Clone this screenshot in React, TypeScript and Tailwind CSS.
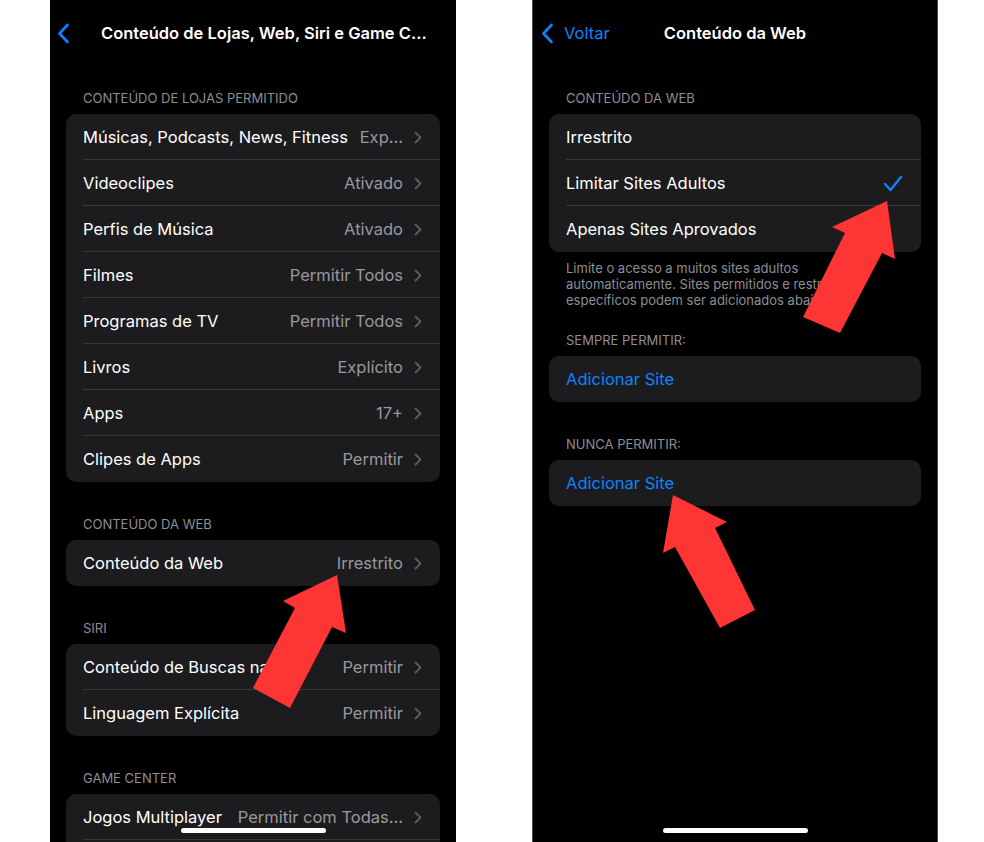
import React from 'react';

type Row = { label: string; value?: string; blue?: boolean; check?: boolean };

const font = { fontFamily: 'Inter, "Liberation Sans", sans-serif' };

const BackChevron = () => (
  <svg width="13" height="21" viewBox="0 0 13 21" className="shrink-0">
    <path d="M10.5 2 L2.5 10.5 L10.5 19" fill="none" stroke="#0a84ff" strokeWidth="2.6" strokeLinecap="round" strokeLinejoin="round" />
  </svg>
);

const RowChevron = () => (
  <svg width="8" height="13" viewBox="0 0 8 13" className="shrink-0 ml-[11px]">
    <path d="M1.5 1.5 L6.5 6.5 L1.5 11.5" fill="none" stroke="#5b5b60" strokeWidth="1.8" strokeLinecap="round" strokeLinejoin="round" />
  </svg>
);

const Check = () => (
  <svg width="20" height="17" viewBox="0 0 20 17" className="shrink-0">
    <path d="M2 9 L7.5 15 L18 2" fill="none" stroke="#0a84ff" strokeWidth="2.4" strokeLinecap="round" strokeLinejoin="round" />
  </svg>
);

const Header = ({ text, top = 'pt-[35px]' }: { text: string; top?: string }) => (
  <div className={`${top} pb-[9px] pl-[33px] text-[13px] leading-[14px] text-[#8e8e93]`}>{text}</div>
);

const Card = ({ rows }: { rows: Row[] }) => (
  <div className="mx-[16px] rounded-[10px] bg-[#1c1c1e] overflow-hidden">
    {rows.map((r, i) => (
      <div key={i} className="pl-[17px]">
        <div
          className={`flex items-center h-[46px] pt-[1px] pr-[18px] ${i < rows.length - 1 ? 'border-b border-[#38383a]' : ''}`}
        >
          <span className={`text-[16.5px] whitespace-nowrap ${r.blue ? 'text-[#0a84ff]' : 'text-white'}`}>{r.label}</span>
          <span className="flex-1" />
          {r.value && <span className="text-[16.5px] text-[#98989f] whitespace-nowrap">{r.value}</span>}
          {r.value && <RowChevron />}
          {r.check && <Check />}
        </div>
      </div>
    ))}
  </div>
);

const HomeBar = () => (
  <div className="absolute bottom-[9px] left-0 right-0 flex justify-center">
    <div className="w-[145px] h-[5px] rounded-full bg-white" />
  </div>
);

const LeftPhone = () => (
  <div className="relative w-[406px] h-[842px] bg-black overflow-hidden" style={font}>
    <div className="h-[67px] flex items-center pl-[7px]">
      <BackChevron />
      <span className="ml-[31px] text-[16.5px] font-semibold text-white whitespace-nowrap">
        Conteúdo de Lojas, Web, Siri e Game C...
      </span>
    </div>
    <Header text="CONTEÚDO DE LOJAS PERMITIDO" top="pt-[24px]" />
    <Card
      rows={[
        { label: 'Músicas, Podcasts, News, Fitness', value: 'Exp...' },
        { label: 'Videoclipes', value: 'Ativado' },
        { label: 'Perfis de Música', value: 'Ativado' },
        { label: 'Filmes', value: 'Permitir Todos' },
        { label: 'Programas de TV', value: 'Permitir Todos' },
        { label: 'Livros', value: 'Explícito' },
        { label: 'Apps', value: '17+' },
        { label: 'Clipes de Apps', value: 'Permitir' },
      ]}
    />
    <Header text="CONTEÚDO DA WEB" />
    <Card rows={[{ label: 'Conteúdo da Web', value: 'Irrestrito' }]} />
    <Header text="SIRI" />
    <Card
      rows={[
        { label: 'Conteúdo de Buscas na Web', value: 'Permitir' },
        { label: 'Linguagem Explícita', value: 'Permitir' },
      ]}
    />
    <Header text="GAME CENTER" />
    <Card
      rows={[
        { label: 'Jogos Multiplayer', value: 'Permitir com Todas...' },
        { label: '' },
      ]}
    />
    <HomeBar />
  </div>
);

const RightPhone = () => (
  <div className="relative w-[406px] h-[842px] bg-black overflow-hidden border-x border-[#4a4a4a]" style={font}>
    <div className="relative h-[67px] flex items-center pl-[8px]">
      <BackChevron />
      <span className="ml-[10px] text-[16.5px] text-[#0a84ff]">Voltar</span>
      <span className="absolute left-0 right-0 text-center text-[16.5px] font-semibold text-white pointer-events-none">
        Conteúdo da Web
      </span>
    </div>
    <Header text="CONTEÚDO DA WEB" top="pt-[24px]" />
    <Card
      rows={[
        { label: 'Irrestrito' },
        { label: 'Limitar Sites Adultos', check: true },
        { label: 'Apenas Sites Aprovados' },
      ]}
    />
    <div className="pt-[8px] pl-[33px] text-[13px] leading-[16px] text-[#8e8e93]">
      Limite o acesso a muitos sites adultos
      <br />
      automaticamente. Sites permitidos e restritos
      <br />
      específicos podem ser adicionados abaixo.
    </div>
    <Header text="SEMPRE PERMITIR:" top="pt-[25px]" />
    <Card rows={[{ label: 'Adicionar Site', blue: true }]} />
    <Header text="NUNCA PERMITIR:" />
    <Card rows={[{ label: 'Adicionar Site', blue: true }]} />
    <HomeBar />
  </div>
);

const Arrows = () => (
  <svg className="absolute inset-0 pointer-events-none" width="984" height="842" viewBox="0 0 984 842">
    <g fill="#fe3535">
      <polygon points="337,575 346,633 332,627 290,708 253,688 295,608 283,601" />
      <polygon points="887,201 895,259 882,253 840,333 803,317 845,233 832,227" />
      <polygon points="673,495 727,522 715,528 755,610 720,628 675,547 663,553" />
    </g>
  </svg>
);

export default function App() {
  return (
    <div className="relative w-[984px] h-[842px] bg-white overflow-hidden">
      <div className="flex pl-[50px] gap-[76px]">
        <LeftPhone />
        <RightPhone />
      </div>
      <Arrows />
    </div>
  );
}
